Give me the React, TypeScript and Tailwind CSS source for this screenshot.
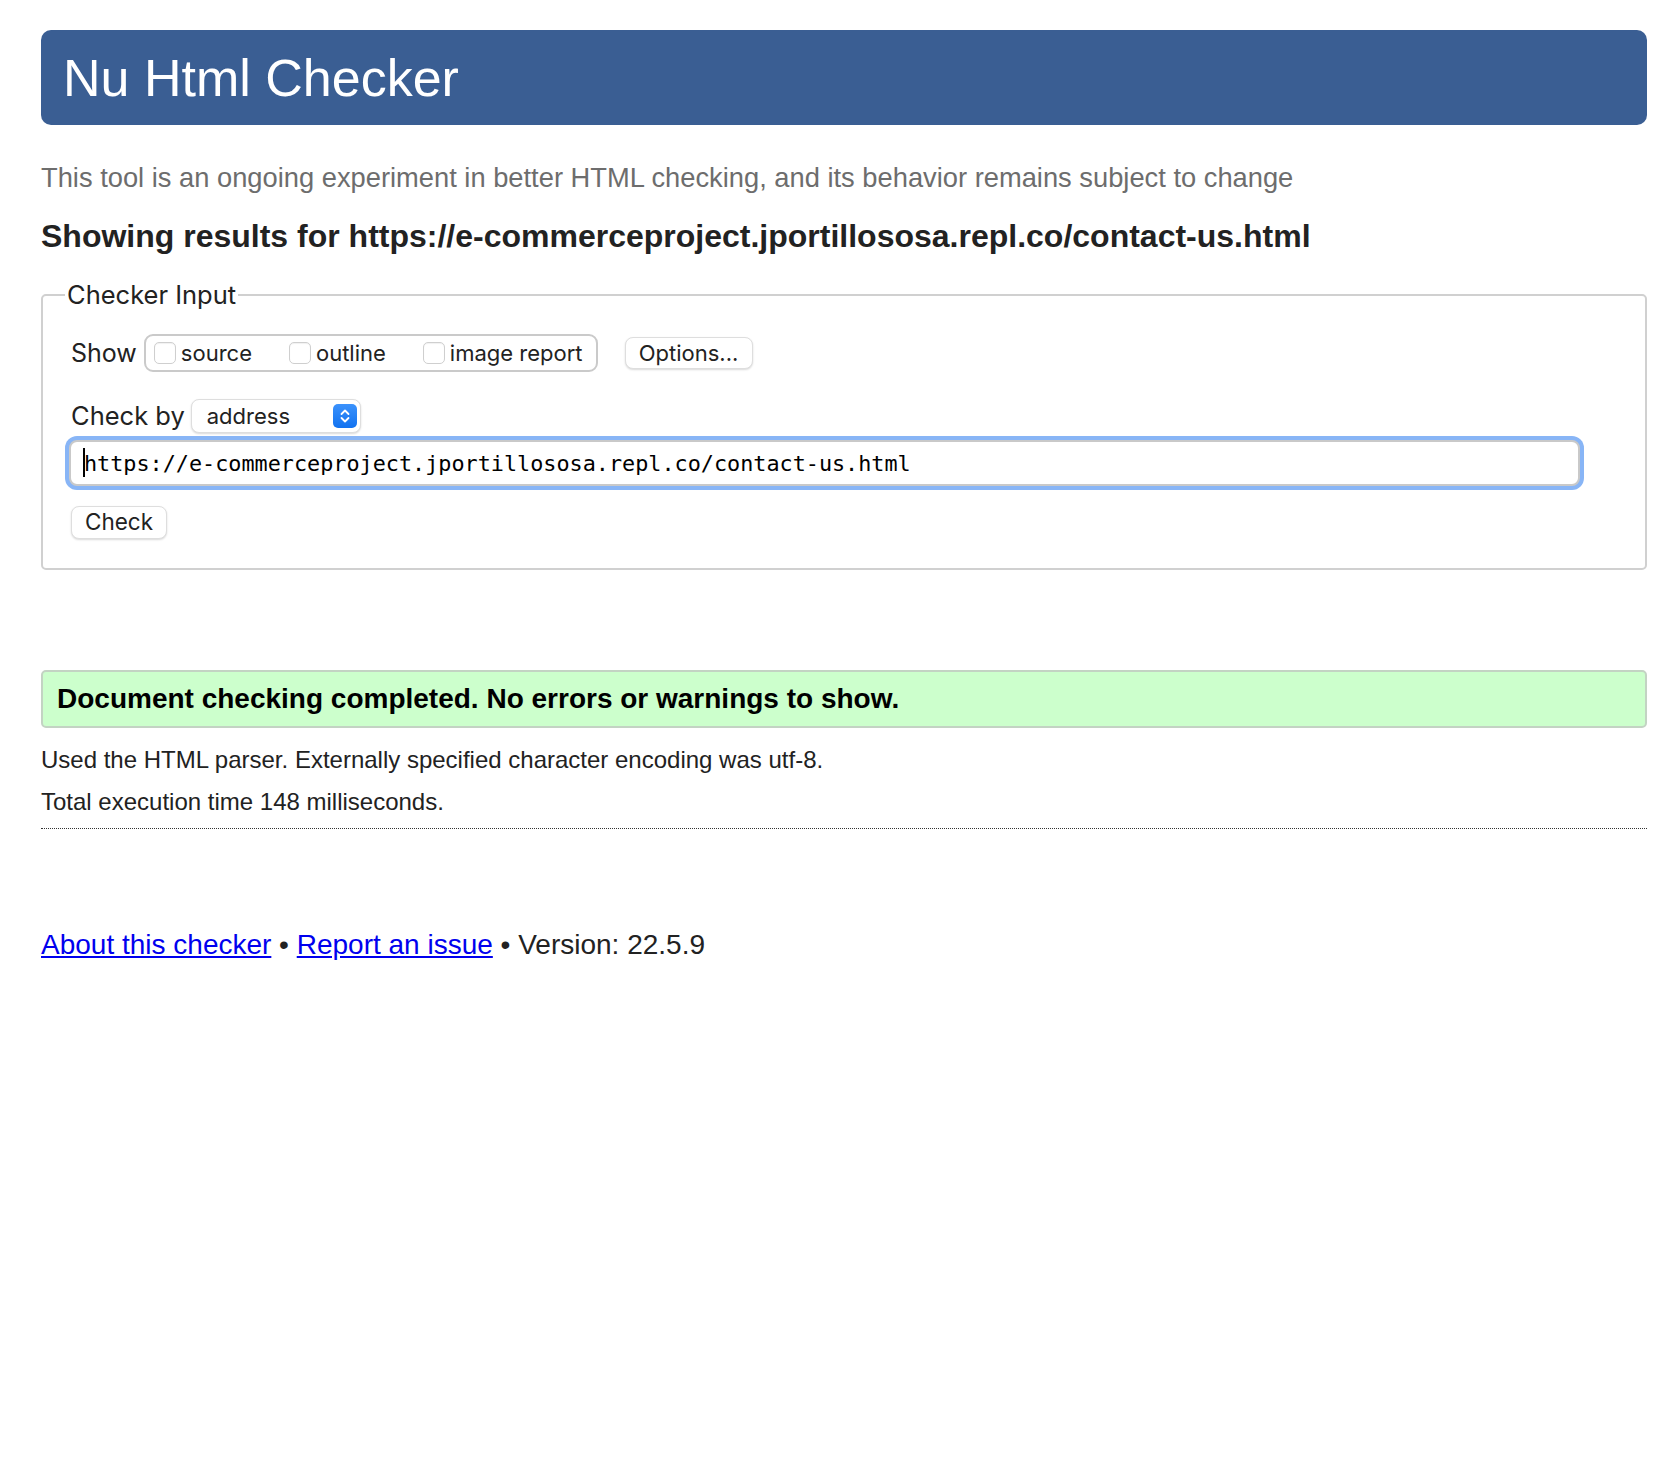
import React from 'react';

function Stepper() {
    return (
        <svg width="24" height="24" viewBox="0 0 24 24">
            <defs>
                <linearGradient id="stp" x1="0" y1="0" x2="0" y2="1">
                    <stop offset="0" stopColor="#3b92fc" />
                    <stop offset="1" stopColor="#1172f0" />
                </linearGradient>
            </defs>
            <rect x="0" y="0" width="24" height="24" rx="5" fill="url(#stp)" />
            <path d="M8.5 10 L12 6.5 L15.5 10" fill="none" stroke="#fff" strokeWidth="1.8" strokeLinecap="round" strokeLinejoin="round" />
            <path d="M8.5 14 L12 17.5 L15.5 14" fill="none" stroke="#fff" strokeWidth="1.8" strokeLinecap="round" strokeLinejoin="round" />
        </svg>
    );
}

function Check({ label, first }: { label: string; first?: boolean }) {
    return (
        <label className={`flex items-center ${first ? '' : 'ml-[37px]'}`}>
            <input
                type="checkbox"
                className="h-[22px] w-[22px] appearance-none rounded-[5px] border border-[#cfcfcf] bg-white shadow-[inset_0_1px_1px_rgba(0,0,0,0.06)]"
            />
            <span className="ml-[5px] text-[22px] leading-none text-[#222]">{label}</span>
        </label>
    );
}

export default function App() {
    const url = 'https://e-commerceproject.jportillososa.repl.co/contact-us.html';

    return (
        <div className="min-h-[1464px] bg-white font-['Liberation_Sans',Arial,sans-serif] text-[#222]">
            <div className="ml-[41px] w-[1606px] pt-[30px]">
                {/* Header */}
                <header className="flex h-[95px] items-center rounded-[10px] bg-[#3a5e93] pl-[22px]">
                    <h1 className="text-[52px] leading-none text-white">Nu Html Checker</h1>
                </header>

                <p className="mt-[37px] text-[27.3px] leading-[32px] text-[#6d6d6d]">
                    This tool is an ongoing experiment in better HTML checking, and its behavior remains subject to change
                </p>

                <h2 className="mt-[23px] text-[32px] font-bold leading-[38px] text-[#222]">
                    Showing results for {url}
                </h2>

                {/* Checker Input */}
                <fieldset className="mt-[25px] rounded-[5px] border-2 border-[#d0d0d0] pb-[29px] pl-[28px] font-['Inter',sans-serif]">
                    <legend className="-ml-[6px] px-[2px] text-[25.5px] leading-[30px] text-[#222]">Checker Input</legend>

                    <div className="mt-[24px] flex items-center">
                        <span className="text-[25px] leading-none">Show</span>
                        <div className="ml-[7px] flex h-[38px] items-center rounded-[9px] border-2 border-[#cacaca] pl-[8px] pr-[13px]">
                            <Check label="source" first />
                            <Check label="outline" />
                            <Check label="image report" />
                        </div>
                        <button className="ml-[27px] h-[32px] w-[128px] rounded-[8px] border border-[#dedede] bg-white text-[22px] leading-none text-[#222] shadow-[0_1px_2px_rgba(0,0,0,0.15)]">
                            Options...
                        </button>
                    </div>

                    <div className="mt-[27px] flex items-center">
                        <span className="text-[25.5px] leading-none">Check by</span>
                        <div className="relative ml-[6px] h-[34px] w-[170px]">
                            <select className="h-full w-full appearance-none rounded-[8px] border border-[#dedede] bg-white pl-[15px] text-[22px] leading-none text-[#222] shadow-[0_1px_2px_rgba(0,0,0,0.15)]">
                                <option>address</option>
                                <option>file upload</option>
                                <option>text input</option>
                            </select>
                            <span className="pointer-events-none absolute right-[4px] top-[5px]">
                                <Stepper />
                            </span>
                        </div>
                    </div>

                    <div className="relative -ml-[2px] mt-[7px] w-[1511px]">
                        <input
                            type="text"
                            readOnly
                            value={url}
                            className="h-[46px] w-full rounded-[8px] border-2 border-[#c9c9c9] bg-white pl-[13px] font-['DejaVu_Sans_Mono',monospace] text-[21.8px] text-black shadow-[0_0_0_4px_#88b5f6] outline-none"
                        />
                        <span className="absolute left-[14px] top-[8px] h-[29px] w-[2px] bg-black" />
                    </div>

                    <button className="mt-[20px] h-[33px] w-[96px] rounded-[8px] border border-[#dedede] bg-white text-[22.5px] leading-none text-[#222] shadow-[0_1px_2px_rgba(0,0,0,0.15)]">
                        Check
                    </button>
                </fieldset>

                {/* Result */}
                <div className="mt-[100px] flex h-[58px] items-center rounded-[5px] border-2 border-[#c3d3c3] bg-[#ccffcc] pl-[14px]">
                    <p className="text-[28px] font-bold leading-none text-black">
                        Document checking completed. No errors or warnings to show.
                    </p>
                </div>

                <p className="mt-[18px] text-[24px] leading-[28px]">
                    Used the HTML parser. Externally specified character encoding was utf-8.
                </p>
                <p className="mt-[14px] text-[24px] leading-[28px]">Total execution time 148 milliseconds.</p>

                <hr className="mt-[12px] border-0 border-t border-dotted border-[#333]" />

                <p className="mt-[100px] text-[28px] leading-[32px]">
                    <a href="#" className="text-[#0000ee] underline">About this checker</a>
                    {' • '}
                    <a href="#" className="text-[#0000ee] underline">Report an issue</a>
                    {' • Version: 22.5.9'}
                </p>
            </div>
        </div>
    );
}
